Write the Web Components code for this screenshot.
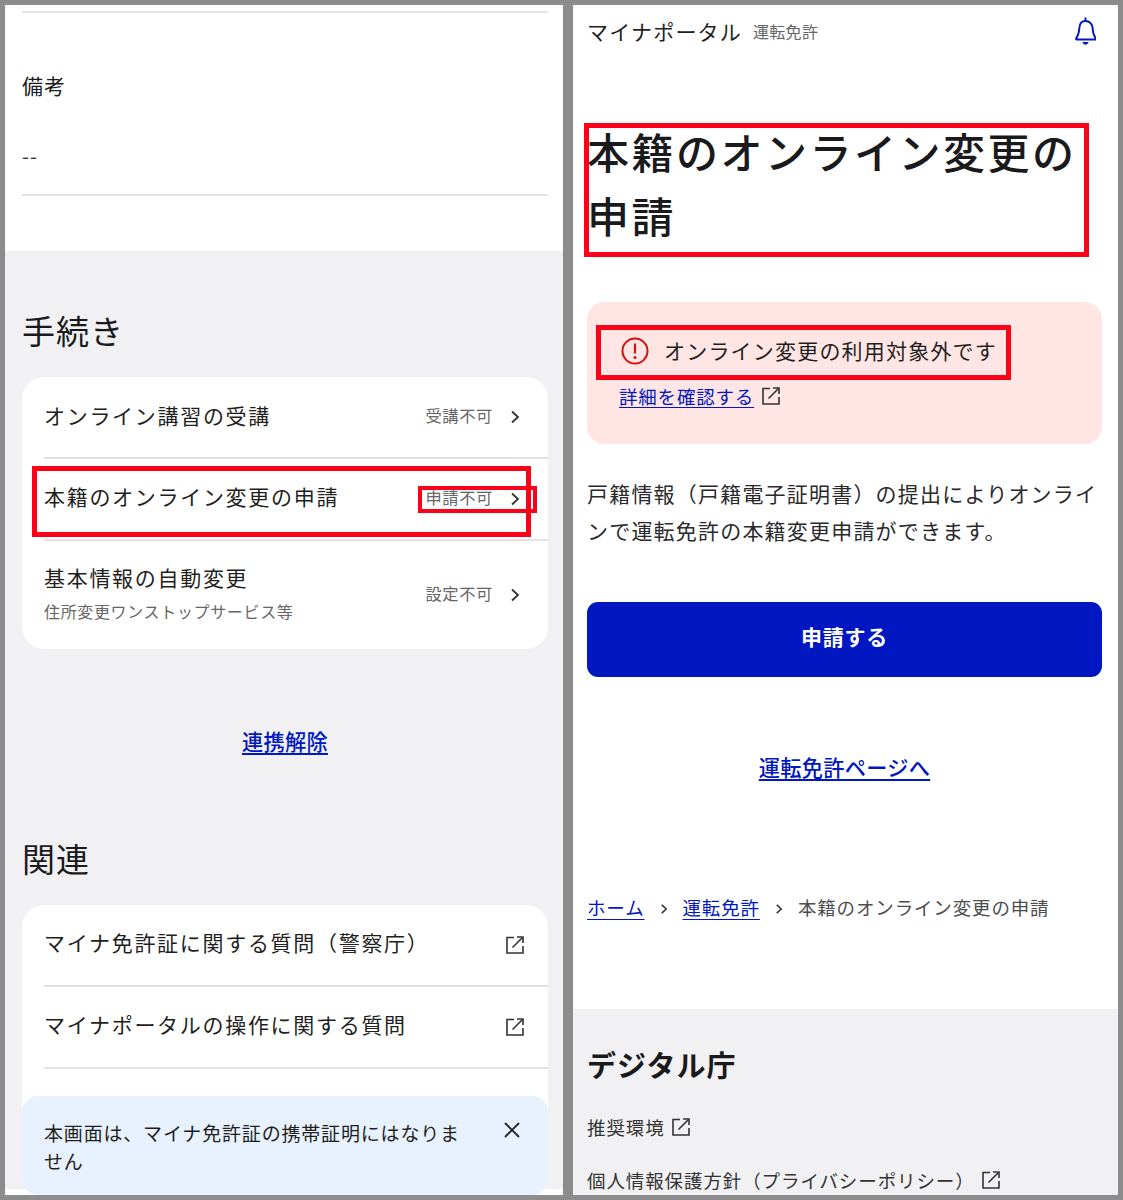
<!DOCTYPE html>
<html lang="ja">
<head>
<meta charset="utf-8">
<title>マイナポータル</title>
<style>
  html, body { margin: 0; background: #8c8c8c; }
  body {
    width: 1123px; height: 1200px; box-sizing: border-box; padding: 5px;
    display: flex; gap: 10px; overflow: hidden;
    font-family: "Noto Sans CJK JP", "Noto Sans", sans-serif; color: #1a1a1c;
  }
</style>
</head>
<body>
  <x-panel style="width:558px">
    <x-band pad="6px 15px 0 17px">
      <x-def-item>
        <span slot="term">備考</span>
        --
      </x-def-item>
    </x-band>
    <x-band tone="gray" pad="55px 15px 0 17px">
      <x-heading>手続き</x-heading>
      <x-list-card>
        <x-list-row h="82" status="受講不可" lift="4">オンライン講習の受講</x-list-row>
        <x-list-row h="82" status="申請不可" lift="6">本籍のオンライン変更の申請</x-list-row>
        <x-list-row h="108" status="設定不可" lift="6" last>基本情報の自動変更<span slot="sub">住所変更ワンストップサービス等</span></x-list-row>
      </x-list-card>
      <x-center-link gap="76px 0 0">連携解除</x-center-link>
      <x-heading style="margin-top:77px">関連</x-heading>
      <x-list-card>
        <x-list-row h="82" external lift="6">マイナ免許証に関する質問（警察庁）</x-list-row>
        <x-list-row h="82" external lift="6">マイナポータルの操作に関する質問</x-list-row>
        <x-list-row h="120" external last></x-list-row>
      </x-list-card>
    </x-band>
    <x-toast>本画面は、マイナ免許証の携帯証明にはなりません</x-toast>
    <x-mark style="left:27px;top:461px;width:499px;height:71px"></x-mark>
    <x-mark style="left:413px;top:481px;width:119px;height:27px" thin></x-mark>
  </x-panel>

  <x-panel style="width:545px">
    <x-top-bar>
      マイナポータル
      <span slot="sub">運転免許</span>
    </x-top-bar>
    <x-band pad="52px 16px 0 14px">
      <x-page-title>本籍のオンライン変更の申請</x-page-title>
      <x-alert>
        オンライン変更の利用対象外です
        <span slot="link">詳細を確認する</span>
      </x-alert>
      <x-lead>戸籍情報（戸籍電子証明書）の提出によりオンラインで運転免許の本籍変更申請ができます。</x-lead>
      <x-primary-button>申請する</x-primary-button>
      <x-center-link gap="74px 0 0">運転免許ページへ</x-center-link>
      <x-crumbs>
        <span slot="a">ホーム</span>
        <span slot="b">運転免許</span>
        本籍のオンライン変更の申請
      </x-crumbs>
    </x-band>
    <x-footer-band>
      デジタル庁
      <span slot="one">推奨環境</span>
      <span slot="two">個人情報保護方針（プライバシーポリシー）</span>
    </x-footer-band>
    <x-mark style="left:11px;top:118px;width:505px;height:134px"></x-mark>
    <x-mark style="left:23px;top:320px;width:415px;height:55px"></x-mark>
  </x-panel>

<script>
  const EXTERNAL_ICON = `<svg width="18" height="18" viewBox="0 0 18 18" fill="none" stroke="currentColor" stroke-width="1.6">
    <path d="M8 1.500H1v15.500h16V10"/><path d="M6.500 11.500 16.500 1.500"/><path d="M11 1h6v6"/></svg>`;
  const CHEVRON_ICON = `<svg width="10" height="16" viewBox="0 0 10 16" fill="none" stroke="currentColor" stroke-width="1.8">
    <path d="M2 2.500 8 8l-6 5.500"/></svg>`;

  // small helper, every element gets an open shadow root from its own template
  function define(name, html, setup) {
    const template = document.createElement('template');
    template.innerHTML = html;
    customElements.define(name, class extends HTMLElement {
      constructor() {
        super();
        this.attachShadow({ mode: 'open' });
        this.shadowRoot.appendChild(template.content.cloneNode(true));
      }
      connectedCallback() {
        if (setup) setup(this, this.shadowRoot);
      }
    });
  }

  define('x-panel', `<style>
    :host { display: block; position: relative; height: 1190px; overflow: hidden; background: #fff; flex: none; }
  </style><slot></slot>`);

  define('x-band', `<style>
    :host { display: block; }
    :host([tone="gray"]) { background: #f1f1f4; }
  </style><slot></slot>`, (el) => { el.style.padding = el.getAttribute('pad') || '0'; });

  define('x-def-item', `<style>
    :host { display: block; border-top: 2px solid #e6e6e6; border-bottom: 2px solid #e2e2e2; margin-bottom: 55px; }
    .term { font-size: 21px; letter-spacing: 1px; line-height: 30px; padding-top: 57px; }
    .value { font-size: 20px; letter-spacing: 1px; line-height: 30px; color: #333; padding: 41px 0 23px; }
  </style><div class="term"><slot name="term"></slot></div><div class="value"><slot></slot></div>`);

  define('x-heading', `<style>
    :host { display: block; font-size: 33px; letter-spacing: 1px; line-height: 48px; margin-bottom: 23px; }
  </style><slot></slot>`);

  define('x-list-card', `<style>
    :host { display: block; background: #fff; border-radius: 22px; overflow: hidden; }
  </style><slot></slot>`);

  define('x-list-row', `<style>
    :host { display: flex; align-items: center; box-sizing: border-box; margin-left: 22px; padding-right: 28px; border-bottom: 2px solid #e3e3e3; }
    :host([last]) { border-bottom: 0; }
    .main { flex: 1; }
    .label { font-size: 21px; letter-spacing: 1.700px; line-height: 30px; color: #1f1f21; }
    .sub { font-size: 16px; letter-spacing: .65px; line-height: 22px; color: #666; margin-top: 8px; }
    .status { font-size: 16.300px; letter-spacing: .6px; color: #666; margin: -4px 17px 0 0; }
    .icon { display: flex; color: #333; }
    :host([external]) .icon { margin-right: -4px; margin-top: -1px; }
  </style>
  <div class="main"><div class="label"><slot></slot></div><div class="sub"><slot name="sub"></slot></div></div>
  <span class="status"></span><span class="icon"></span>`, (el, root) => {
    el.style.height = el.getAttribute('h') + 'px';
    root.querySelector('.status').textContent = el.getAttribute('status') || '';
    root.querySelector('.icon').innerHTML = el.hasAttribute('external') ? EXTERNAL_ICON : CHEVRON_ICON;
    // rows without a sub line should not reserve its height
    if (!el.querySelector('[slot="sub"]')) root.querySelector('.sub').remove();
    if (el.hasAttribute('lift')) root.querySelector('.label').style.marginTop = '-' + el.getAttribute('lift') + 'px';
  });

  define('x-center-link', `<style>
    :host { display: block; text-align: center; font-size: 21.200px; font-weight: 500; letter-spacing: .3px; line-height: 32px; }
    span { color: #0017c1; text-decoration: underline; text-underline-offset: 3px; }
  </style><span><slot></slot></span>`, (el) => { el.style.margin = el.getAttribute('gap') || '0'; });

  define('x-toast', `<style>
    :host { position: absolute; left: 17px; top: 1091px; width: 526px; height: 99px; box-sizing: border-box; background: #e8f1fe; border-radius: 16px; padding: 23px 27px 0 22px; display: flex; gap: 36px; }
    p { margin: 0; flex: 1; font-size: 19px; letter-spacing: .82px; line-height: 28px; color: #1f1f21; }
    svg { flex: none; margin-top: 2px; color: #222; }
  </style><p><slot></slot></p>
  <svg width="18" height="18" viewBox="0 0 18 18" fill="none" stroke="currentColor" stroke-width="1.8"><path d="M2 2l14 14M16 2 2 16"/></svg>`);

  define('x-mark', `<style>
    :host { position: absolute; box-sizing: border-box; border: 5px solid #ff0019; }
    :host([thin]) { border-width: 4.500px; }
  </style>`);

  define('x-top-bar', `<style>
    :host { display: flex; align-items: center; height: 52px; padding: 0 22px 0 14px; }
    .name { font-size: 21px; letter-spacing: 1.200px; color: #1f1f21; }
    .sub { font-size: 16px; letter-spacing: .3px; color: #666; margin-left: 11px; flex: 1; }
    svg { color: #0017c1; margin-top: -1px; }
  </style><span class="name"><slot></slot></span><span class="sub"><slot name="sub"></slot></span>
  <svg width="21" height="28" viewBox="0 0 22 28" preserveAspectRatio="none" fill="none" stroke="currentColor" stroke-width="2">
    <path d="M11 4c-4 0-6.200 2.800-6.400 6.800-.2 4.700-1 7.500-3.400 10.700a.6.6 0 0 0 .5 1h19.600a.6.6 0 0 0 .5-1c-2.400-3.200-3.200-6-3.400-10.700C18.200 6.800 15 4 11 4Z"/>
    <path d="M11 .5V4"/><path d="M7.500 25h7l-2 2.500h-3Z" fill="currentColor" stroke="none"/>
  </svg>`);

  define('x-page-title', `<style>
    :host { display: block; margin: 10px 0 55px; font-size: 42px; letter-spacing: 2.500px; line-height: 64px; font-weight: 500; color: #1a1a1c; }
  </style><slot></slot>`);

  define('x-alert', `<style>
    :host { display: block; box-sizing: border-box; height: 142px; background: #ffe6e5; border-radius: 17px; padding: 33px 32px 0; }
    .title { display: flex; align-items: center; gap: 14px; height: 34px; padding-left: 1px; font-size: 21px; letter-spacing: 1.200px; line-height: 34px; color: #1f1f21; }
    .title span { margin-top: -4px; }
    .title svg { margin-top: -2px; }
    .link { display: flex; align-items: center; gap: 8px; margin-top: 13px; font-size: 18.500px; letter-spacing: .8px; line-height: 28px; color: #333; }
    .link span { color: #0017c1; text-decoration: underline; text-underline-offset: 3px; }
  </style>
  <div class="title">
    <svg width="30" height="30" viewBox="0 0 30 30" fill="none"><circle cx="15" cy="15" r="12.500" stroke="#d60f0f" stroke-width="2"/><path d="M15 7.500v10" stroke="#d60f0f" stroke-width="2.200"/><circle cx="15" cy="21.500" r="1.500" fill="#d60f0f"/></svg>
    <span><slot></slot></span>
  </div>
  <div class="link"><span><slot name="link"></slot></span>${EXTERNAL_ICON}</div>`);

  define('x-lead', `<style>
    :host { display: block; margin-top: 31px; font-size: 21px; letter-spacing: 1.200px; line-height: 37px; color: #2a2a2c; }
  </style><slot></slot>`);

  define('x-primary-button', `<style>
    :host { display: flex; align-items: center; justify-content: center; box-sizing: border-box; height: 75px; padding-bottom: 8px; margin-top: 53px; background: #0017c1; border-radius: 11px; color: #fff; font-size: 21px; font-weight: 700; letter-spacing: .7px; }
  </style><slot></slot>`);

  define('x-crumbs', `<style>
    :host { display: flex; align-items: center; height: 30px; margin-top: 109px; font-size: 18.500px; letter-spacing: .85px; color: #4d4d4d; padding-bottom: 87px; }
    a { color: #0017c1; text-decoration: underline; text-underline-offset: 4px; }
    svg { margin: 3px 15px 0; color: #333; }
  </style>
  <a><slot name="a"></slot></a>
  <svg width="8" height="12" viewBox="0 0 10 16" fill="none" stroke="currentColor" stroke-width="2"><path d="M2 2.500 8 8l-6 5.500"/></svg>
  <a><slot name="b"></slot></a>
  <svg width="8" height="12" viewBox="0 0 10 16" fill="none" stroke="currentColor" stroke-width="2"><path d="M2 2.500 8 8l-6 5.500"/></svg>
  <span><slot></slot></span>`);

  define('x-footer-band', `<style>
    :host { display: block; background: #f1f1f4; padding: 32px 14px 0; height: 200px; }
    h2 { margin: 0 0 26px; font-size: 29px; font-weight: 700; letter-spacing: 1px; line-height: 46px; color: #1a1a1c; }
    .item { display: flex; align-items: center; gap: 7px; height: 28px; margin-bottom: 25px; font-size: 18.500px; letter-spacing: .9px; color: #333; }
  </style>
  <h2><slot></slot></h2>
  <div class="item"><slot name="one"></slot>${EXTERNAL_ICON}</div>
  <div class="item"><slot name="two"></slot>${EXTERNAL_ICON}</div>`);
</script>
</body>
</html>
